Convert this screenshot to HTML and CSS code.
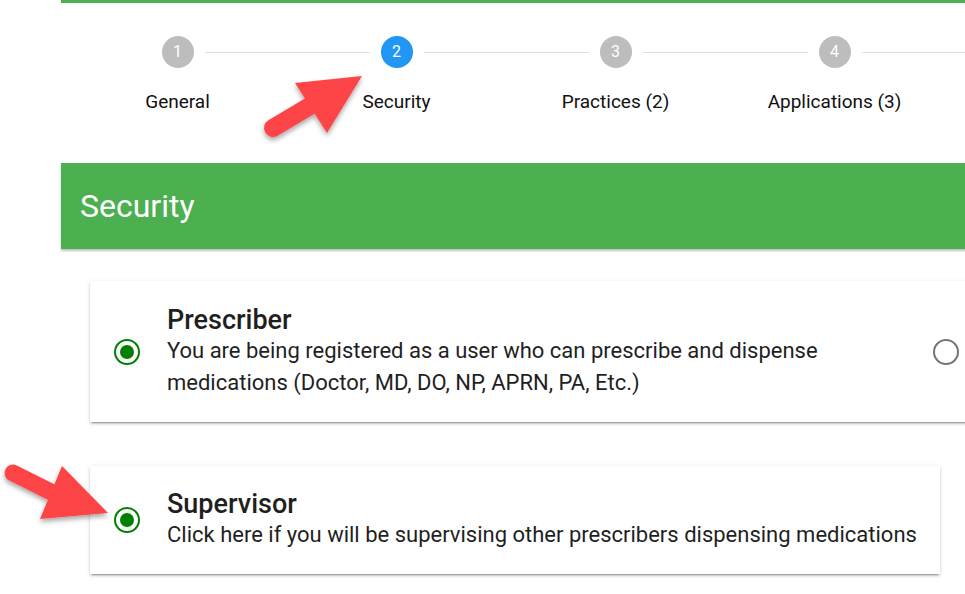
FILE: index.html
```html
<!DOCTYPE html>
<html>
<head>
<meta charset="utf-8">
<link rel="stylesheet" href="styles.css">
</head>
<body>
<div class="page">
  <div class="topbar"></div>
  <div class="stepper">
    <div class="step"><div class="num">1</div><div class="label">General</div></div>
    <div class="step"><div class="num active">2</div><div class="label">Security</div></div>
    <div class="step"><div class="num">3</div><div class="label">Practices (2)</div></div>
    <div class="step"><div class="num">4</div><div class="label">Applications (3)</div></div>
  </div>
  <div class="header">Security</div>
  <div class="cards">
    <div class="card card-wide">
      <span class="radio checked"></span>
      <div class="text">
        <div class="title">Prescriber</div>
        <div class="desc">You are being registered as a user who can prescribe and dispense medications (Doctor, MD, DO, NP, APRN, PA, Etc.)</div>
      </div>
      <span class="radio"></span>
    </div>
    <div class="card card-narrow">
      <span class="radio checked"></span>
      <div class="text">
        <div class="title">Supervisor</div>
        <div class="desc">Click here if you will be supervising other prescribers dispensing medications</div>
      </div>
    </div>
  </div>
</div>
<svg class="arrows" width="965" height="594" viewBox="0 0 965 594">
  <defs>
    <filter id="sh" x="-20%" y="-20%" width="140%" height="140%">
      <feDropShadow dx="0" dy="3" stdDeviation="2.5" flood-color="#000" flood-opacity="0.35"/>
    </filter>
  </defs>
  <g filter="url(#sh)" fill="#fd4447" stroke="#fd4447">
    <line x1="273" y1="128" x2="315" y2="103" stroke-width="18" stroke-linecap="round"/>
    <polygon points="295,83 362,76 327,133" stroke="none"/>
    <line x1="13" y1="473" x2="55" y2="494" stroke-width="17" stroke-linecap="round"/>
    <polygon points="62,466 108,513 40,519" stroke="none"/>
  </g>
</svg>
</body>
</html>
```
FILE: styles.css
```css
html, body {
  margin: 0;
  padding: 0;
  background: #fff;
  overflow: hidden;
  width: 965px;
  height: 594px;
}
body {
  font-family: Roboto, "Noto Sans", sans-serif;
  color: #1f1f1f;
  position: relative;
}
.page {
  margin-left: 61px;
  width: 1000px;
}
.topbar {
  height: 3px;
  background: #4caf50;
}
.stepper {
  display: flex;
  padding-left: 7px;
  padding-top: 33px;
  box-sizing: border-box;
  height: 160px;
}
.step {
  width: 219px;
  display: flex;
  flex-direction: column;
  align-items: center;
  position: relative;
}
.step::after {
  content: "";
  position: absolute;
  top: 16px;
  left: calc(50% + 27px);
  width: 165px;
  height: 1px;
  background: #e0e0e0;
}
.num {
  width: 32px;
  height: 32px;
  border-radius: 50%;
  background: #bdbdbd;
  color: #fff;
  font-size: 16px;
  line-height: 32px;
  text-align: center;
}
.num.active {
  background: #2196f3;
}
.label {
  margin-top: 22px;
  font-size: 19px;
  line-height: 24px;
  color: #111;
}
.header {
  height: 86px;
  background: #4caf50;
  color: #fff;
  font-size: 32px;
  line-height: 86px;
  padding-left: 19px;
  box-shadow: 0 2px 2px rgba(0,0,0,0.25);
}
.cards {
  padding: 32px 0 0 29px;
  display: flex;
  flex-direction: column;
  align-items: flex-start;
  gap: 44px;
}
.card {
  display: flex;
  align-items: center;
  background: #fff;
  box-shadow: 0 3px 1px -2px rgba(0,0,0,.2), 0 2px 2px 0 rgba(0,0,0,.14), 0 1px 5px 0 rgba(0,0,0,.12);
  padding: 0 0 0 24px;
  box-sizing: border-box;
}
.card-wide {
  width: 900px;
  height: 141px;
}
.card-narrow {
  width: 850px;
  height: 108px;
}
.radio {
  flex: none;
  width: 26px;
  height: 26px;
  border: 2px solid #757575;
  border-radius: 50%;
  box-sizing: border-box;
  position: relative;
}
.radio.checked {
  border-color: #008000;
}
.radio.checked::after {
  content: "";
  position: absolute;
  left: 4px;
  top: 4px;
  width: 14px;
  height: 14px;
  border-radius: 50%;
  background: #008000;
}
.text {
  margin-left: 27px;
  width: 770px;
  flex: none;
}
.card-wide .text {
  width: 700px;
  margin-right: 66px;
}
.title {
  font-size: 27px;
  font-weight: 500;
  line-height: 30px;
}
.desc {
  font-size: 22px;
  line-height: 32px;
}
.card-narrow .desc {
  line-height: 32px;
}
.arrows {
  position: absolute;
  left: 0;
  top: 0;
  pointer-events: none;
}
```
